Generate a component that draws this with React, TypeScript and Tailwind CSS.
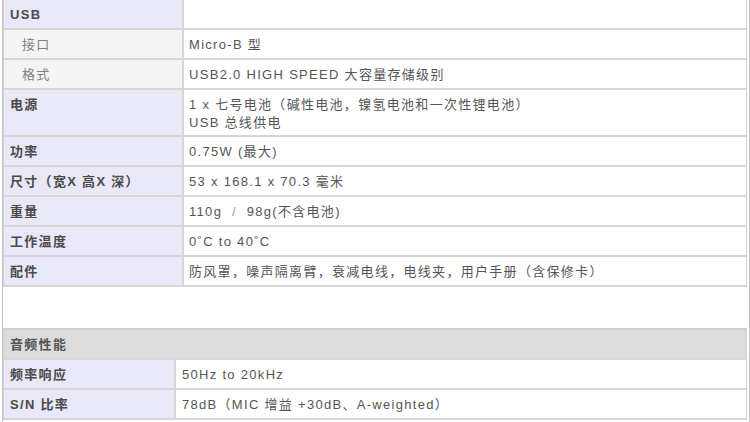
import React from "react";

const font = {
  fontFamily: '"Liberation Sans", Arial, "Noto Sans CJK SC", sans-serif',
};

type Row = {
  label: string;
  value: React.ReactNode;
  sub?: boolean;
  tall?: boolean;
};

const rows1: Row[] = [
  { label: "USB", value: "" },
  { label: "接口", value: "Micro-B 型", sub: true },
  { label: "格式", value: "USB2.0 HIGH SPEED 大容量存储级别", sub: true },
  {
    label: "电源",
    value: (
      <>
        <div>1 x 七号电池（碱性电池，镍氢电池和一次性锂电池）</div>
        <div>USB 总线供电</div>
      </>
    ),
    tall: true,
  },
  { label: "功率", value: "0.75W (最大)" },
  { label: "尺寸（宽X 高X 深）", value: "53 x 168.1 x 70.3 毫米" },
  {
    label: "重量",
    value: (
      <>
        110g{"\u00a0\u00a0"}
        <span className="text-[#999]">/</span>
        {"\u00a0\u00a0"}98g(不含电池)
      </>
    ),
  },
  { label: "工作温度", value: "0˚C to 40˚C" },
  { label: "配件", value: "防风罩，噪声隔离臂，衰减电线，电线夹，用户手册（含保修卡）" },
];

const rows2: Row[] = [
  { label: "频率响应", value: "50Hz to 20kHz" },
  { label: "S/N 比率", value: "78dB（MIC 增益 +30dB、A-weighted）" },
];

function TableRow({ r, wide }: { r: Row; wide: boolean }) {
  const pad = r.tall ? "pt-[6px] pb-[3px]" : "pt-[6px] pb-[4px]";
  return (
    <div className="flex border-b-2 border-[#d6d6d6]">
      <div
        className={`${wide ? "w-[180px]" : "w-[172px]"} shrink-0 border-r-2 border-[#d6d6d6] ${pad} ${
          r.sub
            ? "bg-[#f4f4f4] pl-[18px] text-[#808080] font-normal"
            : "bg-[#e8e8f8] pl-[6px] text-[#4a4a4a] font-bold"
        }`}
      >
        {r.label}
      </div>
      <div className={`flex-1 bg-white ${pad} ${wide ? "pl-[5px]" : "pl-[6px]"} text-[#555]`}>
        {r.value}
      </div>
    </div>
  );
}

export default function App() {
  return (
    <div
      className="w-[750px] h-[422px] overflow-hidden bg-white text-[13px] leading-[18px] tracking-[1.3px]"
      style={font}
    >
      <div className="ml-[2px] w-[748px] h-[422px] border-x border-[#c4c4c4] pr-[2px]">
        <div className="border-x border-[#d0d0d0]">
          {rows1.map((r, i) => (
            <TableRow key={i} r={r} wide />
          ))}
        </div>
        <div className="mt-[41px] border-x border-t-2 border-[#d0d0d0]">
          <div className="flex border-b-2 border-[#d6d6d6] bg-[#dcdcdc] pt-[6px] pb-[4px] pl-[6px] font-bold text-[#555]">
            音频性能
          </div>
          {rows2.map((r, i) => (
            <TableRow key={i} r={r} wide={false} />
          ))}
        </div>
      </div>
    </div>
  );
}
